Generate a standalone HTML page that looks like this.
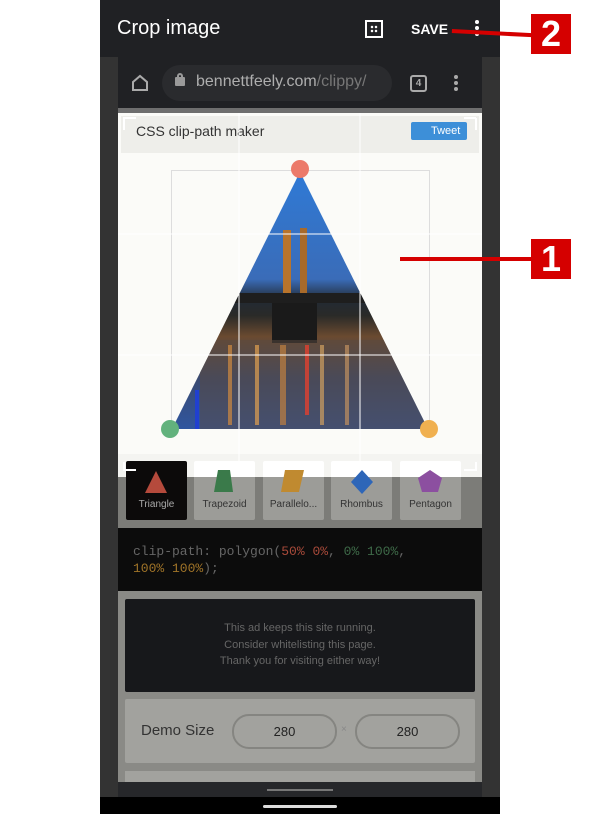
<!DOCTYPE html>
<html><head><style>
*{margin:0;padding:0;box-sizing:border-box}
body{width:600px;height:814px;background:#fff;position:relative;overflow:hidden;font-family:"Liberation Sans",sans-serif}
.a{position:absolute}
</style></head><body>
<div class="a" style="left:100px;top:0;width:400px;height:814px;background:#333333"></div>
<div class="a" style="left:100px;top:0;width:400px;height:57px;background:#202124"></div>
<div class="a" style="left:117px;top:17px;color:#fff;font-size:20px">Crop image</div>
<div class="a" style="left:365px;top:20px;width:18px;height:18px;border:2px solid #fff"></div>
<div class="a" style="left:370px;top:25px;width:8px;height:8px;background:radial-gradient(circle,#fff 1px,transparent 1.5px) 0 0/4px 4px"></div>
<div class="a" style="left:411px;top:21px;color:#fff;font-size:14px;font-weight:bold">SAVE</div>
<div class="a" style="left:475px;top:20px;width:4px;height:4px;border-radius:2px;background:#fff;box-shadow:0 6px #fff,0 12px #fff"></div>
<!-- browser bar -->
<div class="a" style="left:118px;top:57px;width:364px;height:52px;background:#202124"></div>
<svg class="a" style="left:130px;top:73px" width="20" height="20"><path d="M3 9 L10 3 L17 9 V17 H3 Z" fill="none" stroke="#aaa" stroke-width="2"/></svg>
<div class="a" style="left:162px;top:65px;width:230px;height:36px;border-radius:18px;background:#2a2b2e"></div>
<div class="a" style="left:175px;top:77px;width:10px;height:9px;background:#9a9a9a;border-radius:1px"></div>
<div class="a" style="left:177px;top:73px;width:6px;height:6px;border:2px solid #9a9a9a;border-bottom:none;border-radius:3px 3px 0 0"></div>
<div class="a" style="left:196px;top:73px;color:#aeaeae;font-size:16px">bennettfeely.com<span style="color:#777">/clippy/</span></div>
<div class="a" style="left:410px;top:75px;width:17px;height:17px;border:2px solid #aaa;border-radius:3px;color:#aaa;font-size:10px;text-align:center;line-height:13px;font-weight:bold">4</div>
<div class="a" style="left:454px;top:75px;width:4px;height:4px;border-radius:2px;background:#aaa;box-shadow:0 6px #aaa,0 12px #aaa"></div>
<div class="a" style="left:118px;top:108px;width:364px;height:6px;background:#6e6e6e"></div>
<!-- crop area -->
<div class="a" style="left:118px;top:113px;width:364px;height:364px;background:#fbfbf8"></div>
<div class="a" style="left:121px;top:116px;width:358px;height:37px;background:#eeeeea"></div>
<div class="a" style="left:136px;top:123px;color:#333;font-size:14px">CSS clip-path maker</div>
<div class="a" style="left:411px;top:122px;width:56px;height:18px;background:#3d8fd8;border-radius:2px;color:#fff;font-size:11px;line-height:18px;padding-left:20px">Tweet</div>
<div class="a" style="left:171px;top:170px;width:259px;height:259px;border:1px solid #ddd"></div>
<!-- dimmed region & tabs -->
<div class="a" style="left:118px;top:454px;width:364px;height:23px;background:#f4f4f1"></div>
<div class="a" style="left:118px;top:477px;width:364px;height:306px;background:#8a8a86"></div>
<div class="a" style="left:118px;top:477px;width:364px;height:51px;background:#7c7c78"></div>
<div class="a" style="left:126px;top:461px;width:61px;height:59px;background:#0c0a0a;border-radius:2px"></div>
<div class="a" style="left:194px;top:461px;width:61px;height:59px;background:linear-gradient(#fff 16px,#9c9c98 16px);border-radius:2px"></div>
<div class="a" style="left:263px;top:461px;width:61px;height:59px;background:linear-gradient(#fff 16px,#9c9c98 16px);border-radius:2px"></div>
<div class="a" style="left:331px;top:461px;width:61px;height:59px;background:linear-gradient(#fff 16px,#9c9c98 16px);border-radius:2px"></div>
<div class="a" style="left:400px;top:461px;width:61px;height:59px;background:linear-gradient(#fff 16px,#9c9c98 16px);border-radius:2px"></div>
<svg class="a" style="left:0;top:0" width="600" height="814">
<defs>
<linearGradient id="g" x1="0" y1="0" x2="0" y2="1">
<stop offset="0" stop-color="#2f7ad6"/><stop offset="0.42" stop-color="#3a6cb8"/>
<stop offset="0.5" stop-color="#222a34"/><stop offset="0.56" stop-color="#2a2a28"/>
<stop offset="0.64" stop-color="#6a4a30"/><stop offset="0.8" stop-color="#3a4a70"/><stop offset="1" stop-color="#3056a0"/>
</linearGradient>
<clipPath id="c"><polygon points="300,172 172,429 428,429"/></clipPath>
</defs>
<g clip-path="url(#c)">
<rect x="160" y="170" width="280" height="260" fill="url(#g)"/>
<rect x="283" y="230" width="8" height="65" fill="#b8742c"/><rect x="300" y="228" width="7" height="67" fill="#a86a2a"/>
<rect x="230" y="293" width="150" height="10" fill="#1e1e1e"/>
<rect x="272" y="303" width="45" height="40" fill="#1a1a1a"/>
<rect x="200" y="340" width="230" height="90" fill="#5a4a40" opacity="0.5"/>
<rect x="228" y="345" width="4" height="80" fill="#d08a40" opacity=".7"/><rect x="255" y="345" width="4" height="80" fill="#e0a050" opacity=".7"/>
<rect x="280" y="345" width="6" height="80" fill="#c08040" opacity=".7"/><rect x="305" y="345" width="4" height="70" fill="#e04030" opacity=".8"/>
<rect x="320" y="345" width="4" height="80" fill="#d0a060" opacity=".7"/><rect x="345" y="345" width="4" height="80" fill="#c09060" opacity=".7"/>
<rect x="195" y="390" width="4" height="40" fill="#2040d0"/>
</g>
<line x1="239" y1="113" x2="239" y2="477" stroke="#fff" stroke-width="1"/>
<line x1="360" y1="113" x2="360" y2="477" stroke="#fff" stroke-width="1"/>
<line x1="118" y1="234" x2="482" y2="234" stroke="#fff" stroke-width="1"/>
<line x1="118" y1="355" x2="482" y2="355" stroke="#fff" stroke-width="1"/>
<circle cx="300" cy="169" r="9" fill="#ec7a6a"/>
<circle cx="170" cy="429" r="9" fill="#62b27d"/>
<circle cx="429" cy="429" r="9" fill="#f0b050"/>
<path d="M124 130 V118 H136 M476 118 H464 M476 118 V130 M124 462 V470 H136 M476 462 V470 H464" fill="none" stroke="#fff" stroke-width="2"/>
<polygon points="156,471 145,493 167,493" fill="#b54a3c"/>
<polygon points="218,470 230,470 233,492 214,492" fill="#3a7a4a"/>
<polygon points="285,470 304,470 299,492 281,492" fill="#c08a30"/>
<polygon points="362,470 373,482 362,494 351,482" fill="#2e66b8"/>
<polygon points="430,470 442,478 438,492 422,492 418,478" fill="#8c4fa0"/>
</svg>
<div class="a" style="left:126px;top:499px;width:61px;text-align:center;font-size:10px;color:#aaa">Triangle</div>
<div class="a" style="left:194px;top:499px;width:61px;text-align:center;font-size:10px;color:#333">Trapezoid</div>
<div class="a" style="left:263px;top:499px;width:61px;text-align:center;font-size:10px;color:#333">Parallelo...</div>
<div class="a" style="left:331px;top:499px;width:61px;text-align:center;font-size:10px;color:#333">Rhombus</div>
<div class="a" style="left:400px;top:499px;width:61px;text-align:center;font-size:10px;color:#333">Pentagon</div>
<div class="a" style="left:118px;top:528px;width:364px;height:63px;background:#0c0c0c"></div>
<div class="a" style="left:133px;top:543px;font-family:'Liberation Mono',monospace;font-size:13px;line-height:17px;color:#666">clip-path: polygon(<span style="color:#a84a3a">50% 0%</span>, <span style="color:#3e6a48">0% 100%</span>,<br><span style="color:#a07428">100% 100%</span>);</div>
<div class="a" style="left:125px;top:599px;width:350px;height:93px;background:#17181b;border-radius:2px"></div>
<div class="a" style="left:125px;top:620px;width:350px;text-align:center;font-size:11px;line-height:16.5px;color:#666">This ad keeps this site running.<br>Consider whitelisting this page.<br>Thank you for visiting either way!</div>
<div class="a" style="left:125px;top:699px;width:350px;height:64px;background:#a2a29e;border-radius:2px"></div>
<div class="a" style="left:141px;top:722px;font-size:15px;color:#333">Demo Size</div>
<div class="a" style="left:232px;top:714px;width:105px;height:35px;border:2px solid #858581;border-radius:17px;text-align:center;line-height:31px;font-size:13px;color:#222">280</div>
<div class="a" style="left:341px;top:724px;font-size:10px;color:#888">×</div>
<div class="a" style="left:355px;top:714px;width:105px;height:35px;border:2px solid #858581;border-radius:17px;text-align:center;line-height:31px;font-size:13px;color:#222">280</div>
<div class="a" style="left:125px;top:771px;width:350px;height:12px;background:#a2a29e"></div>
<div class="a" style="left:118px;top:782px;width:364px;height:15px;background:#26272a"></div>
<div class="a" style="left:267px;top:789px;width:66px;height:2px;background:#777"></div>
<div class="a" style="left:100px;top:797px;width:400px;height:17px;background:#000"></div>
<div class="a" style="left:263px;top:805px;width:74px;height:3px;border-radius:2px;background:#ddd"></div>
<!-- annotations -->
<div class="a" style="left:452px;top:29px;width:80px;height:4px;background:#d50000;transform:rotate(3deg);transform-origin:0 0"></div>
<div class="a" style="left:531px;top:14px;width:40px;height:40px;background:#d50000;color:#fff;font-size:36px;font-weight:bold;text-align:center;line-height:40px">2</div>
<div class="a" style="left:400px;top:257px;width:132px;height:4px;background:#d50000"></div>
<div class="a" style="left:531px;top:239px;width:40px;height:40px;background:#d50000;color:#fff;font-size:36px;font-weight:bold;text-align:center;line-height:40px">1</div>
</body></html>
